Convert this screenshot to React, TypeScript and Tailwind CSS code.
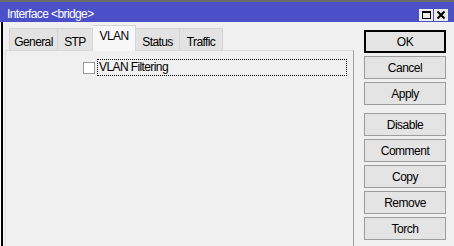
import React from "react";

function Btn({ label, ok, extra }: { label: string; ok?: boolean; extra?: string }) {
  return (
    <div
      className={
        "h-[23px] w-[82px] flex items-center justify-center bg-[#e4e4e4] text-[12px] leading-[14px] text-black tracking-[-0.5px] " +
        (ok ? "border-2 border-black" : "border border-[#9c9c9c]") +
        (extra ? " " + extra : "")
      }
    >
      {label}
    </div>
  );
}

export default function App() {
  return (
    <div className="w-[454px] h-[246px] bg-[#f0f0f0] flex flex-col overflow-hidden font-['Liberation_Sans',Arial,sans-serif]">
      {/* title bar */}
      <div className="h-[22px] border-t-2 border-[#6b6b6b] bg-[#4b50c9] flex items-start pl-[7px] pr-[6px]">
        <span className="pt-[5px] text-white text-[12px] leading-[14px] tracking-[-0.6px]">Interface &lt;bridge&gt;</span>
        <div className="ml-auto mt-[7px] flex gap-[1px]">
          <div className="w-[14px] h-[12px] bg-[#ececec] flex items-center justify-center">
            <svg width="14" height="12" viewBox="0 0 14 12">
              <rect x="3.5" y="2.5" width="8" height="7" fill="none" stroke="#000" strokeWidth="1" />
              <rect x="3" y="2" width="9" height="2" fill="#000" />
            </svg>
          </div>
          <div className="w-[14px] h-[12px] bg-[#ececec] flex items-center justify-center">
            <svg width="14" height="12" viewBox="0 0 14 12">
              <path d="M3.5 2.5 L10.5 9.5 M10.5 2.5 L3.5 9.5" stroke="#000" strokeWidth="2" />
            </svg>
          </div>
        </div>
      </div>

      <div className="flex flex-1 min-h-0">
        <div className="w-[1px] bg-white" />
        <div className="w-[2px] bg-black" />
        {/* main column */}
        <div className="w-[351px] flex flex-col">
          <div className="h-[28px] flex items-end pl-[6px] text-[12px] leading-[14px] text-black tracking-[-0.6px]">
            <div className="w-[49px] h-[22px] pt-[6px] text-center bg-[#e3e3e3] border border-b-0 border-[#d4d4d4]">General</div>
            <div className="w-[35px] h-[22px] pt-[6px] text-center bg-[#e3e3e3] border border-b-0 border-l-0 border-[#d4d4d4]">STP</div>
            <div className="relative z-10 w-[43px] h-[26px] -mb-[1px] pt-[3px] text-center bg-[#f7f7f7] border border-b-0 border-l-0 border-[#d4d4d4]">VLAN</div>
            <div className="w-[44px] h-[22px] pt-[6px] text-center bg-[#e3e3e3] border border-b-0 border-l-0 border-[#d4d4d4]">Status</div>
            <div className="w-[43px] h-[22px] pt-[6px] text-center bg-[#e3e3e3] border border-b-0 border-l-0 border-[#d4d4d4]">Traffic</div>
          </div>
          <div className="flex-1 ml-[2px] bg-[#f0f0f0] border-t border-l border-r border-t-[#d9d9d9] border-l-[#e2e2e2] border-r-[#a0a0a0] pt-[8px]">
            <div className="flex items-start pl-[77px]">
              <div className="mt-[3px] w-[12px] h-[12px] bg-white border border-[#9a9a9a]" />
              <div className="ml-[2px] w-[250px] h-[17px] border border-dotted border-black pl-[1px] text-[12px] leading-[15px] text-black tracking-[-0.6px]">
                VLAN Filtering
              </div>
            </div>
          </div>
        </div>
        {/* buttons */}
        <div className="ml-[10px] pt-[8px] flex flex-col gap-[3px]">
          <Btn label="OK" ok />
          <Btn label="Cancel" />
          <Btn label="Apply" />
          <Btn label="Disable" extra="mt-[5px]" />
          <Btn label="Comment" />
          <Btn label="Copy" />
          <Btn label="Remove" />
          <Btn label="Torch" />
        </div>
      </div>
    </div>
  );
}
